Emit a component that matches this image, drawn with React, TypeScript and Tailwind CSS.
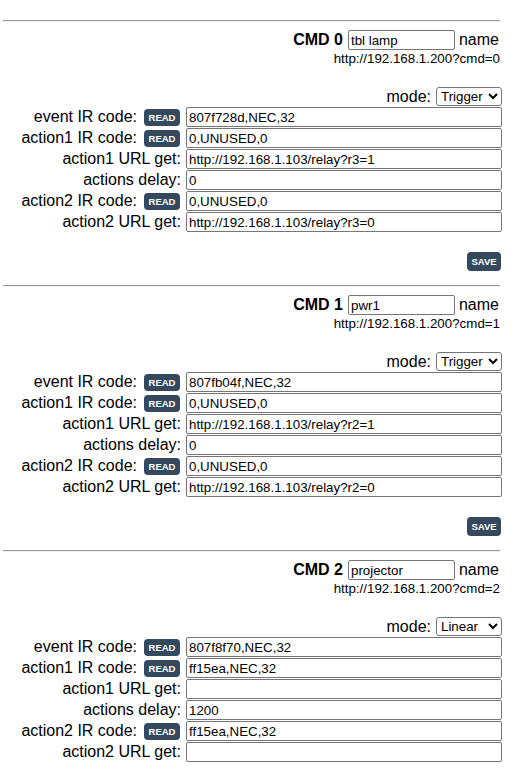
import React from 'react';

type Cmd = {
    id: number;
    name: string;
    mode: string;
    ev: string;
    a1: string;
    u1: string;
    delay: string;
    a2: string;
    u2: string;
};

const cmds: Cmd[] = [
    {
        id: 0,
        name: 'tbl lamp',
        mode: 'Trigger',
        ev: '807f728d,NEC,32',
        a1: '0,UNUSED,0',
        u1: 'http://192.168.1.103/relay?r3=1',
        delay: '0',
        a2: '0,UNUSED,0',
        u2: 'http://192.168.1.103/relay?r3=0',
    },
    {
        id: 1,
        name: 'pwr1',
        mode: 'Trigger',
        ev: '807fb04f,NEC,32',
        a1: '0,UNUSED,0',
        u1: 'http://192.168.1.103/relay?r2=1',
        delay: '0',
        a2: '0,UNUSED,0',
        u2: 'http://192.168.1.103/relay?r2=0',
    },
    {
        id: 2,
        name: 'projector',
        mode: 'Linear',
        ev: '807f8f70,NEC,32',
        a1: 'ff15ea,NEC,32',
        u1: '',
        delay: '1200',
        a2: 'ff15ea,NEC,32',
        u2: '',
    },
];

function Field({ label, value, read }: { label: string; value: string; read?: boolean }) {
    return (
        <div className="flex h-[21px] items-start">
            <div className="flex w-[178px] items-start justify-end whitespace-nowrap text-[16px] leading-[20px]">
                <span>{label}</span>
                {read && (
                    <button className="ml-[7px] mr-[1px] mt-[1.5px] h-[17px] w-[36px] rounded-[4px] bg-[#34495e] text-[9.5px] font-bold leading-[17px] text-white">
                        READ
                    </button>
                )}
            </div>
            <input
                defaultValue={value}
                className="ml-[5px] h-[20px] w-[316px] rounded-[2px] border border-[#767676] bg-white px-[2px] text-[13.33px] text-black outline-none"
            />
        </div>
    );
}

function CmdBlock({ c }: { c: Cmd }) {
    return (
        <div className="flex flex-col">
            <div className="h-[2px] w-[497px] border-t border-b border-t-[#9a9a9a] border-b-[#eeeeee]" />
            <div className="mt-[8px] flex h-[20px] items-center justify-end text-[16px]">
                <span className="font-bold">CMD {c.id}</span>
                <input
                    defaultValue={c.name}
                    className="ml-[5px] h-[20px] w-[107px] rounded-[2px] border border-[#767676] bg-white px-[2px] text-[13.33px] text-black outline-none"
                />
                <span className="ml-[4px] mr-[3px]">name</span>
            </div>
            <div className="flex h-[18px] items-center justify-end pr-[2px] text-[13.33px]">
                http://192.168.1.200?cmd={c.id}
            </div>
            <div className="mt-[19px] flex h-[19px] items-center justify-end text-[16px]">
                <span>mode:</span>
                <select
                    defaultValue={c.mode}
                    className="ml-[5px] h-[19px] w-[66px] rounded-[3px] border border-[#767676] bg-white text-[13.33px] text-black"
                >
                    <option>Trigger</option>
                    <option>Linear</option>
                </select>
            </div>
            <div className="mt-[1px] flex flex-col">
                <Field label="event IR code:" value={c.ev} read />
                <Field label="action1 IR code:" value={c.a1} read />
                <Field label="action1 URL get:" value={c.u1} />
                <Field label="actions delay:" value={c.delay} />
                <Field label="action2 IR code:" value={c.a2} read />
                <Field label="action2 URL get:" value={c.u2} />
            </div>
            <div className="mt-[19px] flex justify-end">
                <button className="mr-[1px] h-[19px] w-[34px] rounded-[4px] bg-[#34495e] text-[9.5px] font-bold leading-[19px] text-white">
                    SAVE
                </button>
            </div>
            <div className="h-[14px]" />
        </div>
    );
}

export default function App() {
    return (
        <div className="min-h-screen bg-white pt-[20px] font-['Liberation_Sans',Arial,sans-serif] text-black">
            <div className="ml-[3px] w-[499px]">
                {cmds.map((c) => (
                    <CmdBlock key={c.id} c={c} />
                ))}
            </div>
        </div>
    );
}
